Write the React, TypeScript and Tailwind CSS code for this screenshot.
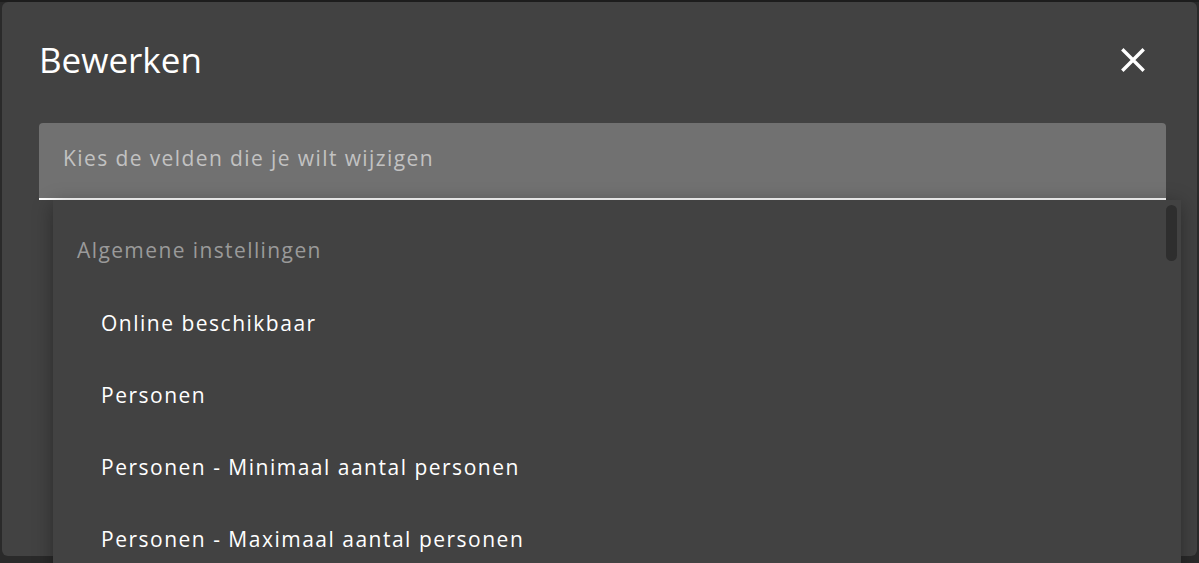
const ITEMS = [
  'Online beschikbaar',
  'Personen',
  'Personen - Minimaal aantal personen',
  'Personen - Maximaal aantal personen',
]

function CloseIcon() {
  return (
    <svg width="24" height="24" viewBox="0 0 24 24" className="text-white">
      <path d="M2.5 2.5 L21.5 21.5 M21.5 2.5 L2.5 21.5" stroke="currentColor" strokeWidth="3.4" strokeLinecap="square" fill="none" />
    </svg>
  )
}

export default function App() {
  return (
    <div
      className="relative w-[1199px] h-[563px] overflow-hidden bg-[#2a2a2a]"
      style={{ fontFamily: '"Open Sans", Lato, sans-serif' }}
    >
      {/* page behind the dialog */}
      <div className="h-[2px] bg-[#1d1d1d]" />

      {/* Dialog */}
      <div className="relative mx-[2px] h-[554px] rounded-md bg-[#424242] pl-[37px] pr-[31px] pt-[36px]">
        <div className="flex items-center justify-between pr-[21px]">
          <h2 className="text-[35px] leading-[44px] text-white">Bewerken</h2>
          <CloseIcon />
        </div>

        {/* Select field */}
        <div className="mt-[41px] h-[77px] rounded-t bg-[#717171] border-b-2 border-white flex items-center px-6">
          <span className="text-[21px] tracking-[1.4px] text-[#c2c2c2] pb-[4px]">Kies de velden die je wilt wijzigen</span>
        </div>

        {/* Dropdown panel */}
        <div className="absolute left-[51px] top-[198px] w-[1128px] h-[420px] bg-[#424242] shadow-[0_4px_18px_rgba(0,0,0,0.35)]">
          <div className="absolute right-[4px] top-[5px] w-[11px] h-[56px] rounded-full bg-[#2e2e2e]" />
          <div className="pt-[31px]">
            <div className="h-[40px] flex items-center pl-[24px] text-[21px] tracking-[1.4px] text-[#9a9a9a]">
              Algemene instellingen
            </div>
            <div className="flex flex-col pt-[17px]">
              {ITEMS.map((item) => (
                <div key={item} className="h-[72px] flex items-center pl-[48px] text-[21px] tracking-[1.5px] text-white">
                  {item}
                </div>
              ))}
            </div>
          </div>
        </div>
      </div>
    </div>
  )
}
